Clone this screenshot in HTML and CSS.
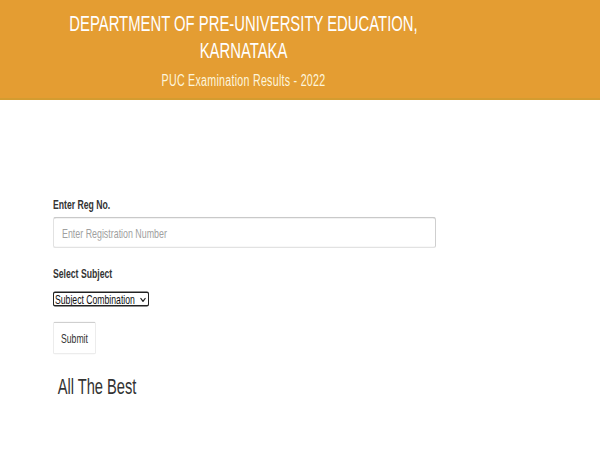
FILE: index.html
```html
<!DOCTYPE html>
<html lang="en">
<head>
<meta charset="utf-8">
<title>PUC Examination Results - 2022</title>
<link rel="stylesheet" href="styles.css">
</head>
<body>
  <header class="banner">
    <div class="banner-inner">
      <h1 class="banner-title">DEPARTMENT OF PRE-UNIVERSITY EDUCATION, KARNATAKA</h1>
      <p class="banner-sub">PUC Examination Results - 2022</p>
    </div>
  </header>
  <main class="content">
    <form class="result-form">
      <label class="field-label" for="reg">Enter Reg No.</label>
      <input class="text-input" id="reg" type="text" placeholder="Enter Registration Number">
      <label class="field-label field-label-second" for="subj">Select Subject</label>
      <span class="select-wrap">
        <select class="subject-select" id="subj">
          <option>Subject Combination</option>
        </select>
        <svg class="select-arrow" viewBox="0 0 6 3" aria-hidden="true">
          <polyline points="0.5,0.3 3,2.6 5.5,0.3" fill="none" stroke="#222" stroke-width="1" vector-effect="non-scaling-stroke"/>
        </svg>
      </span>
      <button class="submit-btn" type="button">Submit</button>
    </form>
    <h3 class="wish">All The Best</h3>
  </main>
</body>
</html>
```
FILE: styles.css
```css
html, body {
  margin: 0;
  padding: 0;
  background: #ffffff;
}

body {
  width: 600px;
  height: 450px;
  overflow: hidden;
  font-family: "Liberation Sans", Arial, sans-serif;
}

/* The reference page is rendered in a horizontally condensed face:
   text is set at 2/3 of its visual height and stretched vertically. */

.banner {
  height: 100px;
  box-sizing: border-box;
  background: #e49d32;
  border-bottom: 2px solid #d49c30;
  padding: 11px 0 0 43px;
}

.banner-inner {
  width: 401px;
  display: flex;
  flex-direction: column;
  text-align: center;
  color: #ffffff;
}

.banner-title {
  margin: 8.8px 0;
  font-size: 14.85px;
  line-height: 17.6px;
  font-weight: normal;
  transform: scaleY(1.5);
}

.banner-sub {
  margin: 7px 0 0;
  font-size: 10.67px;
  line-height: 19px;
  letter-spacing: 0.27px;
  color: #fdf5dc;
  transform: scaleY(1.5);
}

.content {
  padding: 95px 0 0 53px;
}

.result-form {
  display: flex;
  flex-direction: column;
  align-items: flex-start;
}

.field-label {
  display: block;
  font-size: 8.67px;
  line-height: 18px;
  font-weight: bold;
  color: #333333;
  transform: scaleY(1.5);
}

.field-label-second {
  margin-top: 15.5px;
}

.text-input {
  margin: 9.33px 0 5.33px;
  width: 383px;
  height: 21.33px;
  box-sizing: border-box;
  padding: 0 8px;
  border: 1px solid #e2e2e2;
  border-top-color: #c9c9c9;
  border-right-color: #cfcfcf;
  border-radius: 3px / 2px;
  font-family: "Liberation Sans", Arial, sans-serif;
  font-size: 8.87px;
  color: #555555;
  background: #ffffff;
  transform: scaleY(1.5);
}

.text-input::placeholder {
  color: #a0a0a0;
}

.select-wrap {
  position: relative;
  display: block;
  margin: 11.5px 0 2.5px;
  transform: scaleY(1.5);
}

.subject-select {
  display: block;
  appearance: none;
  -webkit-appearance: none;
  width: 96px;
  height: 10px;
  box-sizing: border-box;
  padding: 0 12px 0 1px;
  border: 1px solid #222222;
  border-radius: 2px / 1.33px;
  background: #ffffff;
  font-family: "Liberation Sans", Arial, sans-serif;
  font-size: 8.67px;
  line-height: 8px;
  color: #111111;
}

.select-arrow {
  position: absolute;
  right: 3px;
  top: 3.5px;
  width: 6px;
  height: 3px;
  pointer-events: none;
}

.submit-btn {
  margin: 21px 0 5.5px;
  height: 22px;
  padding: 0 7px;
  box-sizing: border-box;
  background: #ffffff;
  border: 1px solid #ececec;
  border-top-color: #cfcfcf;
  border-radius: 2px / 1.33px;
  font-family: "Liberation Sans", Arial, sans-serif;
  font-size: 8.67px;
  color: #333333;
  transform: scaleY(1.5);
}

.wish {
  margin: 18.5px 0 0 4.67px;
  font-size: 14.67px;
  line-height: 26px;
  font-weight: normal;
  color: #333333;
  transform: scaleY(1.5);
  transform-origin: left center;
}
```
